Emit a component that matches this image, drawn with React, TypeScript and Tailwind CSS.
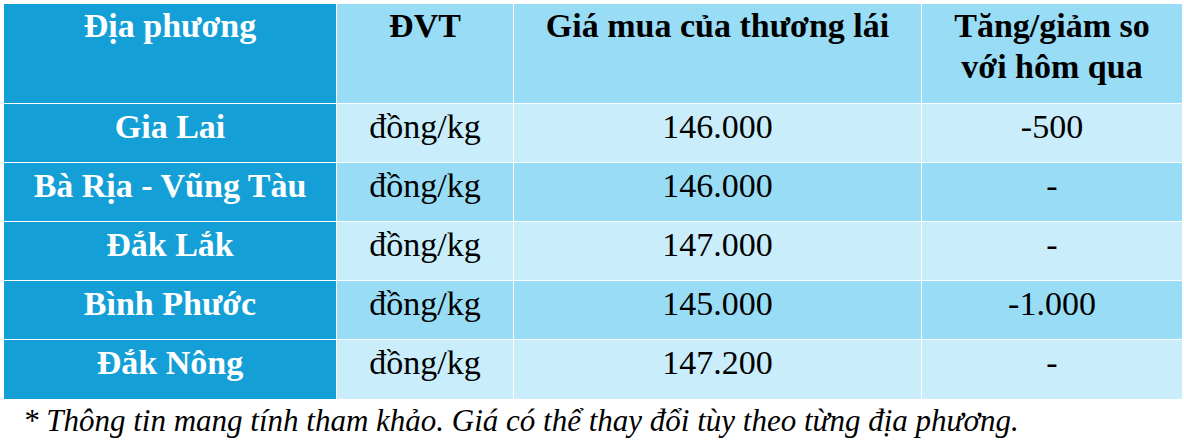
const rows = [
  { place: "Gia Lai", unit: "đồng/kg", price: "146.000", change: "-500" },
  { place: "Bà Rịa - Vũng Tàu", unit: "đồng/kg", price: "146.000", change: "-" },
  { place: "Đắk Lắk", unit: "đồng/kg", price: "147.000", change: "-" },
  { place: "Bình Phước", unit: "đồng/kg", price: "145.000", change: "-1.000" },
  { place: "Đắk Nông", unit: "đồng/kg", price: "147.200", change: "-" },
];

const App = () => {
  return (
    <div className="w-[1184px] h-[446px] bg-white pt-[4px] pl-[4px] text-black [font-family:'Liberation_Serif']">
      <div className="w-[1178px] grid grid-cols-[333px_177px_408px_260px] grid-rows-[100px_repeat(5,59px)] text-[34px] leading-[41px] text-center [font-family:'Liberation_Serif']">
        <div className="bg-[#159fd7] text-white font-bold pt-[1px] border-r border-b border-white [font-family:'Liberation_Serif']">
          Địa phương
        </div>
        <div className="bg-[#98dcf5] font-bold pt-[1px] border-r border-b border-white [font-family:'Liberation_Serif']">
          ĐVT
        </div>
        <div className="bg-[#98dcf5] font-bold pt-[1px] border-r border-b border-white [font-family:'Liberation_Serif']">
          Giá mua của thương lái
        </div>
        <div className="bg-[#98dcf5] font-bold pt-[1px] border-b border-white [font-family:'Liberation_Serif']">
          Tăng/giảm so
          <br />
          với hôm qua
        </div>
        {rows.map((r, i) => {
          const bg = i % 2 === 0 ? "bg-[#c9edfa]" : "bg-[#98dcf5]";
          const edge = i === rows.length - 1 ? "" : "border-b";
          return [
            <div
              key={r.place + "a"}
              className={`bg-[#159fd7] text-white font-bold pt-[2px] border-r border-white [font-family:'Liberation_Serif'] ${edge}`}
            >
              {r.place}
            </div>,
            <div key={r.place + "b"} className={`${bg} pt-[2px] border-r border-white [font-family:'Liberation_Serif'] ${edge}`}>
              {r.unit}
            </div>,
            <div key={r.place + "c"} className={`${bg} pt-[2px] border-r border-white [font-family:'Liberation_Serif'] ${edge}`}>
              {r.price}
            </div>,
            <div key={r.place + "d"} className={`${bg} pt-[2px] border-white [font-family:'Liberation_Serif'] ${edge}`}>
              {r.change}
            </div>,
          ];
        })}
      </div>
      <p className="italic text-[31px] leading-[40px] pl-[19px] pt-[2px] whitespace-nowrap [font-family:'Liberation_Serif']">
        * Thông tin mang tính tham khảo. Giá có thể thay đổi tùy theo từng địa phương.
      </p>
    </div>
  );
};

export default App;
